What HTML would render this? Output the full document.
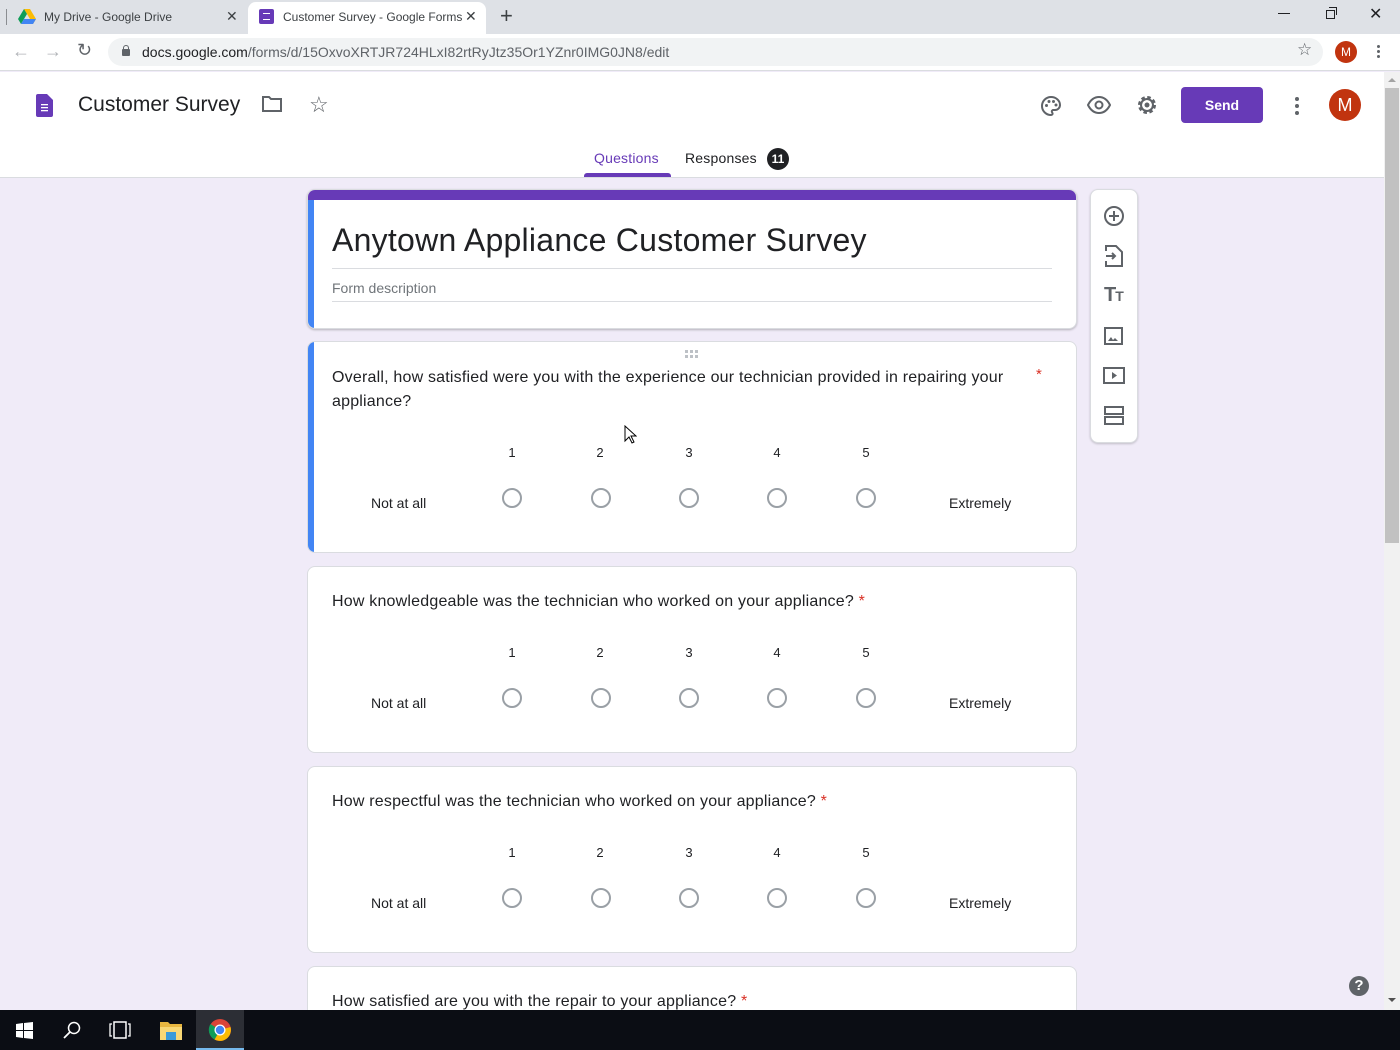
<!DOCTYPE html>
<html style="overflow:hidden;height:1050px"><head><meta charset="utf-8">
<style>
*{box-sizing:border-box;margin:0;padding:0}
body{width:1400px;height:1050px;position:relative;overflow:hidden;font-family:"Liberation Sans",sans-serif;background:#f0ebf8;color:#202124}
.a{position:absolute}
.card{position:absolute;left:307px;width:770px;background:#fff;border:1px solid #dadce0;border-radius:8px;overflow:hidden}
.q{position:absolute;left:24px;font-size:16px;letter-spacing:0.2px;line-height:24px;color:#202124}
.star{color:#d93025}
.num{position:absolute;font-size:13px;color:#202124;width:20px;text-align:center}
.rad{position:absolute;width:20px;height:20px;border:2px solid #9aa0a6;border-radius:50%}
.lbl{position:absolute;font-size:14px;color:#202124}
.ic{position:absolute}
</style></head><body>
<div class="a" style="left:0;top:0;width:1400px;height:34px;background:#dee1e6"></div>
<div class="a" style="left:6px;top:9px;width:1px;height:16px;background:#8a8d91"></div>
<svg class="ic" style="left:18px;top:9px" width="18" height="16" viewBox="0 0 18 16"><polygon points="6,0 12,0 18,10 15,15" fill="#fbbc04"/><polygon points="6,0 0,10 3,15 9,5" fill="#0f9d58"/><polygon points="3,15 15,15 18,10 6,10" fill="#4285f4"/></svg>
<div class="a" style="left:44px;top:10px;font-size:12px;color:#3c4043">My Drive - Google Drive</div>
<div class="a" style="left:226px;top:8px;font-size:14px;color:#3c4043">✕</div>
<div class="a" style="left:248px;top:2px;width:238px;height:32px;background:#fff;border-radius:8px 8px 0 0"></div>
<div class="a" style="left:259px;top:9px;width:15px;height:15px;background:#673ab7;border-radius:2px"></div>
<div class="a" style="left:263px;top:13px;width:7px;height:7px;border-top:1.5px solid #fff;border-bottom:1.5px solid #fff"></div>
<div class="a" style="left:283px;top:10px;font-size:12px;color:#3c4043">Customer Survey - Google Forms</div>
<div class="a" style="left:465px;top:8px;font-size:14px;color:#3c4043">✕</div>
<div class="a" style="left:500px;top:3px;font-size:22px;color:#3c4043">+</div>
<div class="a" style="left:1278px;top:13px;width:12px;height:1px;background:#202124"></div>
<div class="a" style="left:1326px;top:10px;width:9px;height:9px;border:1px solid #202124"></div>
<div class="a" style="left:1329px;top:7px;width:8px;height:8px;border-top:1px solid #202124;border-right:1px solid #202124"></div>
<div class="a" style="left:1369px;top:4px;font-size:16px;color:#202124">✕</div>
<div class="a" style="left:0;top:34px;width:1400px;height:37px;background:#fff;border-bottom:1px solid #dadce0"></div>
<div class="a" style="left:12px;top:41px;font-size:18px;color:#b0b3b7">←</div>
<div class="a" style="left:44px;top:41px;font-size:18px;color:#b0b3b7">→</div>
<div class="a" style="left:77px;top:40px;font-size:18px;color:#5f6368">↻</div>
<div class="a" style="left:108px;top:38px;width:1215px;height:28px;background:#f1f3f4;border-radius:14px"></div>
<div class="a" style="left:122px;top:49px;width:8px;height:7px;background:#5f6368;border-radius:1px"></div>
<div class="a" style="left:123px;top:45px;width:6px;height:6px;border:1.5px solid #5f6368;border-bottom:none;border-radius:3px 3px 0 0"></div>
<div class="a" style="left:142px;top:44px;font-size:14px;color:#202124">docs.google.com<span style="color:#5f6368">/forms/d/15OxvoXRTJR724HLxI82rtRyJtz35Or1YZnr0IMG0JN8/edit</span></div>
<div class="a" style="left:1297px;top:40px;font-size:17px;color:#5f6368">☆</div>
<div class="a" style="left:1335px;top:41px;width:22px;height:22px;border-radius:50%;background:#c1340f;color:#fff;font-size:12px;text-align:center;line-height:22px">M</div>
<div class="a" style="left:1377px;top:45px;width:3px;height:3px;background:#5f6368;border-radius:50%;box-shadow:0 5px 0 #5f6368,0 10px 0 #5f6368"></div>
<div class="a" style="left:0;top:72px;width:1384px;height:106px;background:#fff;border-bottom:1px solid #dadce0"></div>
<svg class="ic" style="left:36px;top:94px" width="17" height="23" viewBox="0 0 17 23"><path d="M2 0h9l6 6v15a2 2 0 0 1-2 2H2a2 2 0 0 1-2-2V2a2 2 0 0 1 2-2z" fill="#673ab7"/><rect x="5" y="10" width="7" height="1.3" fill="#fff"/><rect x="5" y="13" width="7" height="1.3" fill="#fff"/><rect x="5" y="16" width="7" height="1.3" fill="#fff"/></svg>
<div class="a" style="left:78px;top:93px;font-size:21px;color:#202124">Customer Survey</div>
<svg class="ic" style="left:261px;top:95px" width="22" height="18" viewBox="0 0 22 18"><path d="M2 2h6l2 2h10v12H2z" fill="none" stroke="#5f6368" stroke-width="2"/></svg>
<div class="a" style="left:309px;top:92px;font-size:22px;color:#5f6368">☆</div>
<svg class="ic" style="left:1039px;top:94px" width="24" height="24" viewBox="0 0 24 24"><path d="M12 3a9 9 0 0 0 0 18c1 0 1.6-.7 1.6-1.5 0-.4-.2-.7-.4-1-.2-.3-.4-.6-.4-1 0-.8.7-1.5 1.5-1.5H16a5 5 0 0 0 5-5c0-4.4-4-8-9-8z" fill="none" stroke="#5f6368" stroke-width="2"/><circle cx="7.5" cy="11.5" r="1.5" fill="#5f6368"/><circle cx="10" cy="7.5" r="1.5" fill="#5f6368"/><circle cx="14.5" cy="7.5" r="1.5" fill="#5f6368"/><circle cx="17" cy="11" r="1.5" fill="#5f6368"/></svg>
<svg class="ic" style="left:1087px;top:95px" width="24" height="20" viewBox="0 0 24 20"><path d="M1 10C4 4 8 2 12 2s8 2 11 8c-3 6-7 8-11 8S4 16 1 10z" fill="none" stroke="#5f6368" stroke-width="2"/><circle cx="12" cy="10" r="3.5" fill="none" stroke="#5f6368" stroke-width="2"/></svg>
<svg class="ic" style="left:1135px;top:93px" width="24" height="24" viewBox="0 0 24 24"><circle cx="12" cy="12" r="7" fill="none" stroke="#5f6368" stroke-width="4" stroke-dasharray="3.2 2.3"/><circle cx="12" cy="12" r="6" fill="none" stroke="#5f6368" stroke-width="2"/><circle cx="12" cy="12" r="2.5" fill="#5f6368"/></svg>
<div class="a" style="left:1181px;top:87px;width:82px;height:36px;background:#673ab7;border-radius:4px;color:#fff;font-size:14px;font-weight:bold;text-align:center;line-height:36px">Send</div>
<div class="a" style="left:1295px;top:97px;width:4px;height:4px;background:#5f6368;border-radius:50%;box-shadow:0 7px 0 #5f6368,0 14px 0 #5f6368"></div>
<div class="a" style="left:1329px;top:89px;width:32px;height:32px;border-radius:50%;background:#c1340f;color:#fff;font-size:18px;text-align:center;line-height:32px">M</div>
<div class="a" style="left:594px;top:150px;font-size:14px;color:#673ab7;letter-spacing:0.2px">Questions</div>
<div class="a" style="left:584px;top:173px;width:87px;height:4px;background:#673ab7;border-radius:3px 3px 0 0"></div>
<div class="a" style="left:685px;top:150px;font-size:14px;color:#202124;letter-spacing:0.2px">Responses</div>
<div class="a" style="left:767px;top:148px;width:22px;height:22px;border-radius:50%;background:#202124;color:#fff;font-size:12px;font-weight:bold;text-align:center;line-height:22px">11</div>
<div class="card" style="top:189px;height:140px;box-shadow:0 1px 2px rgba(0,0,0,.25)">
<div class="a" style="left:0;top:0;width:770px;height:10px;background:#673ab7"></div>
<div class="a" style="left:0;top:10px;width:6px;height:130px;background:#4285f4"></div>
<div class="a" style="left:24px;top:32px;font-size:32px;letter-spacing:0.25px;color:#202124">Anytown Appliance Customer Survey</div>
<div class="a" style="left:24px;top:78px;width:720px;height:1px;background:#dadce0"></div>
<div class="a" style="left:24px;top:90px;font-size:14px;color:#70757a">Form description</div>
<div class="a" style="left:24px;top:111px;width:720px;height:1px;background:#dadce0"></div>
</div>
<div class="card" style="top:341px;height:212px">
<div class="a" style="left:0;top:0;width:6px;height:212px;background:#4285f4"></div>
<div class="a" style="left:377px;top:8px;width:3px;height:3px;background:#bdc1c6;box-shadow:5px 0 #bdc1c6,10px 0 #bdc1c6,0 5px #bdc1c6,5px 5px #bdc1c6,10px 5px #bdc1c6"></div>
<div class="q" style="top:24px;width:690px">Overall, how satisfied were you with the experience our technician provided in repairing your appliance?</div>
<div class="a star" style="left:728px;top:24px;font-size:15px">*</div>
</div>
<div class="card" style="top:566px;height:187px"><div class="q" style="top:23px">How knowledgeable was the technician who worked on your appliance? <span class="star">*</span></div></div>
<div class="card" style="top:766px;height:187px"><div class="q" style="top:23px">How respectful was the technician who worked on your appliance? <span class="star">*</span></div></div>
<div class="card" style="top:966px;height:44px;border-bottom:none;border-radius:8px 8px 0 0"><div class="q" style="top:23px">How satisfied are you with the repair to your appliance? <span class="star">*</span></div></div>
<div class="num" style="left:502px;top:445px">1</div><div class="num" style="left:590px;top:445px">2</div><div class="num" style="left:679px;top:445px">3</div><div class="num" style="left:767px;top:445px">4</div><div class="num" style="left:856px;top:445px">5</div>
<div class="rad" style="left:502px;top:488px"></div><div class="rad" style="left:591px;top:488px"></div><div class="rad" style="left:679px;top:488px"></div><div class="rad" style="left:767px;top:488px"></div><div class="rad" style="left:856px;top:488px"></div>
<div class="lbl" style="left:371px;top:495px">Not at all</div><div class="lbl" style="left:949px;top:495px">Extremely</div>
<div class="num" style="left:502px;top:645px">1</div><div class="num" style="left:590px;top:645px">2</div><div class="num" style="left:679px;top:645px">3</div><div class="num" style="left:767px;top:645px">4</div><div class="num" style="left:856px;top:645px">5</div>
<div class="rad" style="left:502px;top:688px"></div><div class="rad" style="left:591px;top:688px"></div><div class="rad" style="left:679px;top:688px"></div><div class="rad" style="left:767px;top:688px"></div><div class="rad" style="left:856px;top:688px"></div>
<div class="lbl" style="left:371px;top:695px">Not at all</div><div class="lbl" style="left:949px;top:695px">Extremely</div>
<div class="num" style="left:502px;top:845px">1</div><div class="num" style="left:590px;top:845px">2</div><div class="num" style="left:679px;top:845px">3</div><div class="num" style="left:767px;top:845px">4</div><div class="num" style="left:856px;top:845px">5</div>
<div class="rad" style="left:502px;top:888px"></div><div class="rad" style="left:591px;top:888px"></div><div class="rad" style="left:679px;top:888px"></div><div class="rad" style="left:767px;top:888px"></div><div class="rad" style="left:856px;top:888px"></div>
<div class="lbl" style="left:371px;top:895px">Not at all</div><div class="lbl" style="left:949px;top:895px">Extremely</div>
<svg class="ic" style="left:624px;top:425px" width="13" height="19" viewBox="0 0 13 19"><path d="M1 1v15l4-4 3 6 2-1-3-6h5z" fill="#fff" stroke="#000" stroke-width="1"/></svg>
<div class="a" style="left:1090px;top:189px;width:48px;height:254px;background:#fff;border:1px solid #dadce0;border-radius:8px;box-shadow:0 1px 2px rgba(0,0,0,.2)"></div>
<svg class="ic" style="left:1103px;top:205px" width="22" height="22" viewBox="0 0 22 22"><circle cx="11" cy="11" r="9" fill="none" stroke="#5f6368" stroke-width="2"/><path d="M11 6v10M6 11h10" stroke="#5f6368" stroke-width="2"/></svg>
<svg class="ic" style="left:1105px;top:245px" width="18" height="22" viewBox="0 0 18 22"><path d="M1 6V1h10l6 6v14H1v-5" fill="none" stroke="#5f6368" stroke-width="2"/><path d="M1 11h8M7 8l3 3-3 3" fill="none" stroke="#5f6368" stroke-width="2"/></svg>
<div class="a" style="left:1104px;top:284px;font-size:20px;font-weight:bold;color:#5f6368;letter-spacing:-1px">T<span style="font-size:14px">T</span></div>
<svg class="ic" style="left:1104px;top:327px" width="20" height="19" viewBox="0 0 20 19"><rect x="1" y="1" width="17" height="16" fill="none" stroke="#5f6368" stroke-width="2"/><path d="M4 14l3-4 2 3 2-2 3 3z" fill="#5f6368"/></svg>
<svg class="ic" style="left:1103px;top:367px" width="22" height="18" viewBox="0 0 22 18"><rect x="1" y="1" width="20" height="15" fill="none" stroke="#5f6368" stroke-width="2"/><path d="M9 5v7l5-3.5z" fill="#5f6368"/></svg>
<svg class="ic" style="left:1104px;top:406px" width="20" height="20" viewBox="0 0 20 20"><rect x="1" y="1" width="18" height="7" fill="none" stroke="#5f6368" stroke-width="2"/><rect x="1" y="11" width="18" height="7" fill="none" stroke="#5f6368" stroke-width="2"/></svg>
<div class="a" style="left:1384px;top:72px;width:16px;height:938px;background:#f1f1f1"></div>
<div class="a" style="left:1385px;top:88px;width:14px;height:455px;background:#c1c1c1"></div>
<div class="a" style="left:1388px;top:78px;border-left:4px solid transparent;border-right:4px solid transparent;border-bottom:4px solid #a3a3a3"></div>
<div class="a" style="left:1388px;top:998px;border-left:4px solid transparent;border-right:4px solid transparent;border-top:4px solid #505050"></div>
<div class="a" style="left:1349px;top:976px;width:20px;height:20px;border-radius:50%;background:#5f6368;color:#fff;font-size:15px;font-weight:bold;text-align:center;line-height:20px">?</div>
<div class="a" style="left:0;top:1010px;width:1400px;height:40px;background:#0b0d14"></div>
<svg class="ic" style="left:16px;top:1022px" width="17" height="17" viewBox="0 0 17 17"><path d="M0 2l7-1v7H0zM8 1l9-1v8H8zM0 9h7v7l-7-1zM8 9h9v8l-9-1z" fill="#fff"/></svg>
<svg class="ic" style="left:63px;top:1021px" width="18" height="18" viewBox="0 0 18 18"><circle cx="11" cy="7" r="5.5" fill="none" stroke="#fff" stroke-width="1.5"/><path d="M7 11l-6 6" stroke="#fff" stroke-width="1.8"/></svg>
<svg class="ic" style="left:109px;top:1021px" width="22" height="18" viewBox="0 0 22 18"><rect x="5" y="1" width="12" height="16" fill="none" stroke="#fff" stroke-width="1.5"/><path d="M3 3H1v12h2M19 3h2v12h-2" fill="none" stroke="#fff" stroke-width="1.3"/></svg>
<svg class="ic" style="left:160px;top:1020px" width="22" height="20" viewBox="0 0 22 20"><path d="M0 2h8l2 2h12v16H0z" fill="#e8b640"/><rect x="0" y="7" width="22" height="13" fill="#f8d775"/><rect x="6" y="12" width="10" height="8" fill="#3a9ad9"/></svg>
<div class="a" style="left:196px;top:1010px;width:48px;height:40px;background:#2c2e35"></div>
<div class="a" style="left:196px;top:1048px;width:48px;height:2px;background:#76b9ed"></div>
<svg class="ic" style="left:208px;top:1018px" width="24" height="24" viewBox="0 0 24 24"><circle cx="12" cy="12" r="11" fill="#db4437"/><path d="M12 12L22.5 9A11 11 0 0 1 6.5 21.5z" fill="#fbbc05"/><path d="M12 12L6.5 21.5A11 11 0 0 1 2.5 6z" fill="#0f9d58"/><circle cx="12" cy="12" r="5.5" fill="#fff"/><circle cx="12" cy="12" r="4.2" fill="#4285f4"/></svg>
</body></html>
